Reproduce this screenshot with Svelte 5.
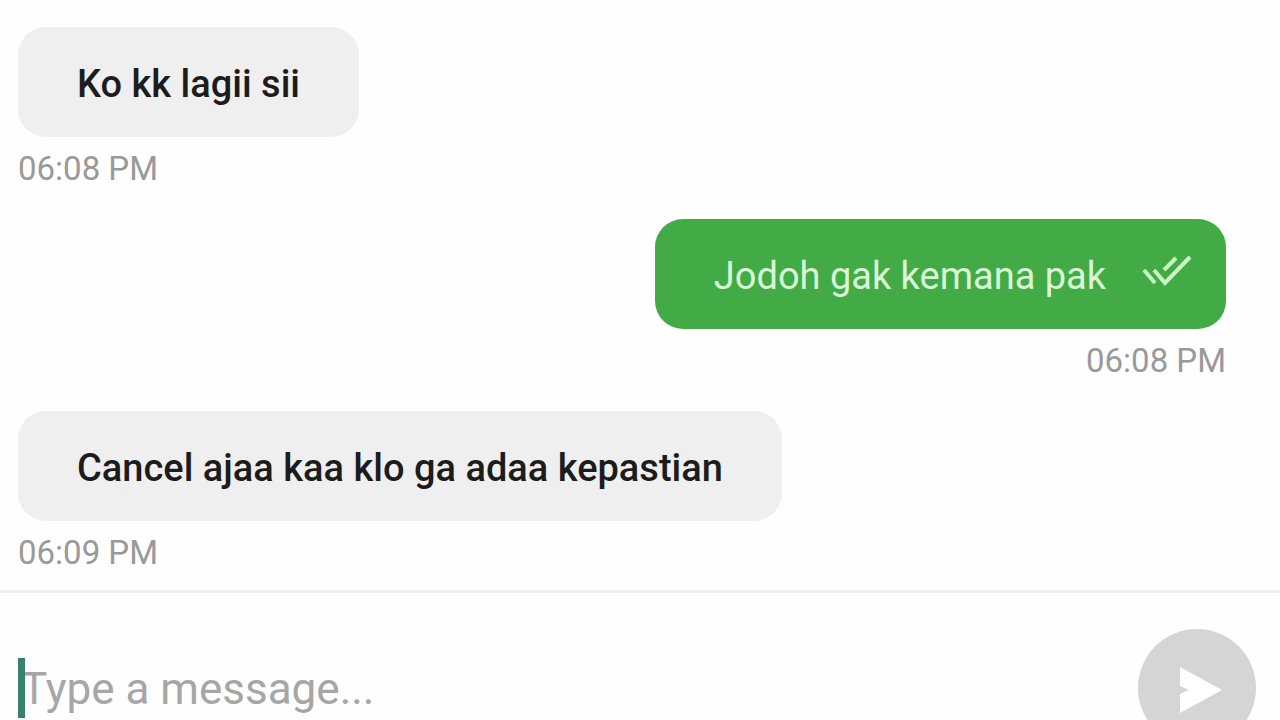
<script lang="ts">
    type Message = {
        text: string;
        time: string;
        mine: boolean;
    };

    let messages: Message[] = [
        { text: 'Ko kk lagii sii', time: '06:08 PM', mine: false },
        { text: 'Jodoh gak kemana pak', time: '06:08 PM', mine: true },
        { text: 'Cancel ajaa kaa klo ga adaa kepastian', time: '06:09 PM', mine: false }
    ];
    let draft = '';

    function send() {
        const text = draft.trim();
        if (!text) return;

        const time = new Date().toLocaleTimeString('en-US', { hour: '2-digit', minute: '2-digit' });
        messages = [...messages, { text, time, mine: true }];
        draft = '';
    }
</script>

<main class="chat">
    <ul class="messages">
        {#each messages as message}
            <li class="message" class:mine={message.mine}>
                <div class="bubble">
                    <span>{message.text}</span>
                    {#if message.mine}
                        <svg class="ticks" viewBox="0 0 50 34" role="img" aria-label="Read">
                            <path d="M2 15 L13 28 M12 15 L23 28 L48 2 M22 15 L34 3" />
                        </svg>
                    {/if}
                </div>
                <time>{message.time}</time>
            </li>
        {/each}
    </ul>

    <form class="composer" on:submit|preventDefault={send}>
        <div class="field">
            <input type="text" placeholder="Type a message..." aria-label="Message" bind:value={draft} />
            {#if !draft}
                <span class="caret"></span>
            {/if}
        </div>
        <button type="submit" aria-label="Send">
            <svg viewBox="0 0 44 48">
                <path d="M1 1 L43 24 L1 47 V28 L10 24 L1 20 Z" />
            </svg>
        </button>
    </form>
</main>

<style>
    :global(body){
        background-color: #fefefe;
    }
    .chat{
        display: flex;
        flex-direction: column;
        height: 100vh;
        overflow: hidden;
        font-family: Roboto, sans-serif;
    }
    .messages{
        display: flex;
        flex-direction: column;
        flex-shrink: 0;
        gap: 34px;
        margin: 0;
        padding: 27px 54px 21px 18px;
        list-style: none;
    }
    .message{
        display: flex;
        flex-direction: column;
        align-items: flex-start;
        gap: 16px;
    }
    .message.mine{
        align-items: flex-end;
    }
    .bubble{
        display: flex;
        align-items: center;
        gap: 36px;
        padding: 34px 59px 30px;
        border-radius: 28px;
        background-color: #efefef;
        color: #1c1c1c;
        font-size: 38px;
        font-weight: 500;
        line-height: 46px;
    }
    .mine .bubble{
        padding-right: 34px;
        background-color: #42ab45;
        color: #d9f7d6;
        font-weight: 400;
    }
    .ticks{
        width: 50px;
        height: 34px;
        margin-bottom: 8px;
        fill: none;
        stroke: #c9f5c6;
        stroke-width: 4;
    }
    time{
        color: #999999;
        font-size: 33px;
        line-height: 32px;
    }
    .composer{
        display: flex;
        align-items: center;
        flex-shrink: 0;
        gap: 24px;
        padding: 36px 24px 36px 18px;
        border-top: 3px solid #eeeeee;
    }
    .field{
        position: relative;
        flex: 1;
    }
    input{
        box-sizing: border-box;
        width: 100%;
        height: 60px;
        padding: 2px 3px 0;
        border: none;
        outline: none;
        background: none;
        color: #1c1c1c;
        font-family: inherit;
        font-size: 44px;
    }
    input::placeholder{
        color: #a6a6a6;
        opacity: 1;
    }
    .caret{
        position: absolute;
        top: 0;
        left: 0;
        width: 7px;
        height: 60px;
        background-color: #35826f;
        pointer-events: none;
    }
    button{
        display: flex;
        align-items: center;
        justify-content: center;
        width: 118px;
        height: 118px;
        padding: 4px 0 0 8px;
        border: none;
        border-radius: 50%;
        background-color: #d5d5d5;
    }
    button svg{
        width: 44px;
        height: 48px;
        fill: #ffffff;
    }
</style>
